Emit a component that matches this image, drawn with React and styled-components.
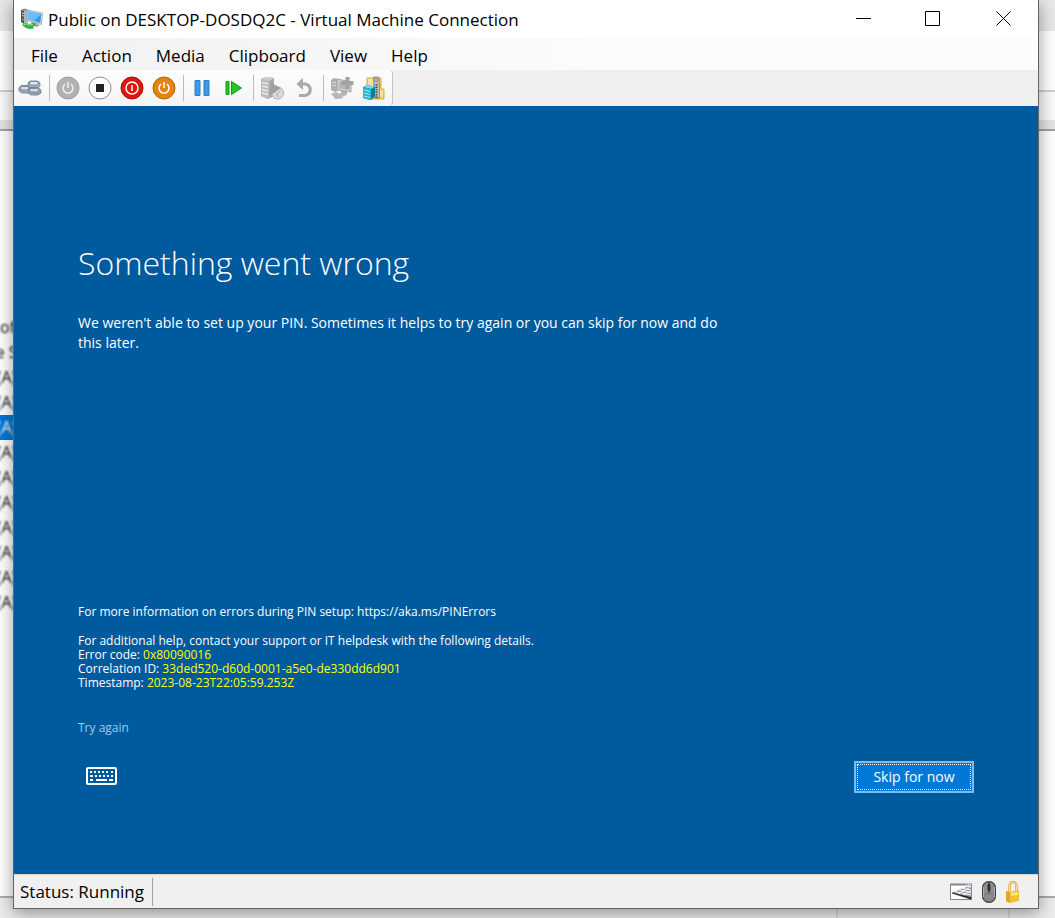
import styled, { createGlobalStyle, css } from "styled-components";

const menus = ["File", "Action", "Media", "Clipboard", "View", "Help"];

const details = [
    { label: "Error code:", value: "0x80090016" },
    { label: "Correlation ID:", value: "33ded520-d60d-0001-a5e0-de330dd6d901" },
    { label: "Timestamp:", value: "2023-08-23T22:05:59.253Z" },
]

const treeRows = [
    { id: 1, text: "of", start: true },
    { id: 2, text: "e S" },
    { id: 3, text: "(A)" },
    { id: 4, text: "(A)" },
    { id: 5, text: "(A)", selected: true },
    { id: 6, text: "(A)" },
    { id: 7, text: "(A)" },
    { id: 8, text: "(A)" },
    { id: 9, text: "(A)" },
    { id: 10, text: "(A)" },
    { id: 11, text: "(A)" },
    { id: 12, text: "(A)" },
]

function AppIcon() {
    return (
        <svg width="22" height="22" viewBox="0 0 22 22" aria-hidden="true">
            <path d="M0 2l3-1.500 4 1v12l-3 2-4-2z" fill="#8d9498" />
            <path d="M0 2l3 1v13l-3-2z" fill="#4b545a" />
            <path d="M3 3l4-1v12l-4 2z" fill="#aeb5b9" />
            <path d="M1 5l2 .6M1 7.500l2 .6" stroke="#d6dadd" />
            <path d="M1 11.500h1.500" stroke="#55e04a" strokeWidth="1.500" />
            <path d="M11 12l5 1.500v2.500l3 1-3 2-6-2z" fill="#9aa2a6" />
            <path d="M6 2l15.500 3-1 11.500L6 12.500z" fill="#dbe3e7" stroke="#7f8b92" strokeWidth=".6" />
            <path d="M7.200 3.300l13 2.700-.8 9L7.200 11.500z" fill="#2f9ce6" />
            <path d="M7.200 3.300l13 2.700-7 7-6-1.500z" fill="#66bff8" />
            <path d="M1 17l4-2.500 3 1.500 5-1 2 2.500-3 1 1 2-5 .5-4-1.500z" fill="#2db14c" />
            <path d="M3 17l2.500-1.200 2.500 1.200 4-.5" stroke="#8beb92" fill="none" />
        </svg>
    )
}

function KeysIcon() {
    return (
        <svg width="24" height="18" viewBox="0 0 24 18" aria-hidden="true">
            <g stroke="#707b89" strokeWidth=".8" strokeLinejoin="round">
                <path d="M10 4l2-2h8l2 2v3l-2 2h-7l-3-2z" fill="#a3b0be" />
                <path d="M11 4l2-1.500h6L20.500 4 19 6h-6z" fill="#dfe6ed" />
                <path d="M1 9l2-2.500h7L12.500 9v3l-2 2H4l-3-2z" fill="#9dabba" />
                <path d="M2 9l2-1.500h5.500L11 9l-1.500 2H4z" fill="#d8e0e9" />
                <path d="M10 11l2-2.500h8l3 2.500v3l-3 2h-7l-3-2z" fill="#93a2b3" />
                <path d="M11 11l2-1.500h6.500L21 11l-1.500 2H13z" fill="#d3dde7" />
            </g>
        </svg>
    )
}

function RoundIcon({ fill, rim, children }) {
    return (
        <svg width="24" height="24" viewBox="0 0 24 24" aria-hidden="true">
            <circle cx="12" cy="12" r="11" fill={fill} stroke={rim} />
            {children}
        </svg>
    )
}

function PowerGlyph({ stroke }) {
    return <path d="M9 8.200a5 5 0 1 0 6 0M12 6v6" fill="none" stroke={stroke} strokeWidth="1.600" />
}

function CheckpointIcon() {
    return (
        <svg width="24" height="24" viewBox="0 0 24 24" aria-hidden="true">
            <path d="M1 3l5-2 8 1v18l-6 3-7-3z" fill="#a8a8a8" />
            <path d="M1 3l5-2 8 1-5 3z" fill="#cecece" />
            <path d="M1 3l8 2v18l-8-3z" fill="#bcbcbc" />
            <path d="M2 6.500l6 1.500M2 10l6 1.500M2 13.500l6 1.500M2 17l6 1.500" stroke="#eaeaea" strokeWidth="1.500" />
            <circle cx="17.500" cy="17" r="6" fill="#dcdcdc" stroke="#a9a9a9" />
            <path d="M11 7l10 5-10 7z" fill="#a0a0a0" />
            <path d="M16.500 18l4-3M16.500 18l2 3" stroke="#a5a5a5" />
        </svg>
    )
}

function RevertIcon() {
    return (
        <svg width="18" height="20" viewBox="0 0 18 20" aria-hidden="true">
            <path d="M5 6h4.500a5.700 5.700 0 0 1 0 11.500H4" fill="none" stroke="#a9a9a9" strokeWidth="3.200" />
            <path d="M8 0L1.500 6 8 12z" fill="#a9a9a9" />
        </svg>
    )
}

function EnhancedIcon() {
    return (
        <svg width="24" height="24" viewBox="0 0 24 24" aria-hidden="true">
            <path d="M1 4l3-2 4 1v12l-3 1-4-2z" fill="#aeaeae" />
            <path d="M2 6l4 1M2 9l4 1" stroke="#dedede" />
            <path d="M11 14h6v4h-6z" fill="#b0b0b0" />
            <path d="M7 3l14 3v10L7 14z" fill="#cfcfcf" stroke="#a8a8a8" />
            <path d="M9 5.500l10 2v6.500l-10-1.500z" fill="#b7b7b7" />
            <path d="M15.500 1h4v4h4v4h-4v4h-4V9h-4V5h4z" fill="#a3a3a3" />
            <path d="M1 18l5-2 3 1.500 6-.5 2 2-4 1.500-1 2-7 .5-2-3z" fill="#b7b7b7" />
        </svg>
    )
}

function ShareIcon() {
    return (
        <svg width="24" height="24" viewBox="0 0 24 24" aria-hidden="true">
            <path d="M5 2h14v11h3v10H5z" fill="#f0cd6b" stroke="#dcae40" />
            <path d="M6 3h5v9H6zM18 14h3v7h-3z" fill="#fae39a" />
            <path d="M11.500 1h5l1 7v14h-5z" fill="#c2c0ba" stroke="#85827b" strokeWidth=".8" />
            <path d="M14.500 8v14" stroke="#55524c" strokeWidth="2" strokeDasharray="1.500 1" />
            <circle cx="14" cy="4" r="1.500" fill="#f5f4f1" stroke="#77736b" />
            <path d="M1 11l4-2 8 1.500v10L9 24l-8-2z" fill="#087f9c" />
            <path d="M1 11l4-2 8 1.500L9 13z" fill="#6be0ed" />
            <path d="M1 11l8 2v11l-8-2z" fill="#1fb6cd" />
            <path d="M2 14l6 1.500M2 17l6 1.500M2 20l6 1.500" stroke="#a5eff6" />
        </svg>
    )
}

function KeyboardIcon() {
    return (
        <svg width="32" height="20" viewBox="0 0 32 20" aria-hidden="true">
            <rect x="1" y="1" width="29" height="16" rx="1" fill="none" stroke="#fff" strokeWidth="2" />
            <path d="M4 5h2M8 5h2M12 5h2M16 5h2M20 5h2M25 5h2M4 9h3M9 9h2M13 9h2M17 9h2M21 9h2M25 9h2M4 13h3M10 13h11M23 13h4" stroke="#fff" strokeWidth="2" />
        </svg>
    )
}

function InputIcon() {
    return (
        <svg width="22" height="18" viewBox="0 0 22 18" aria-hidden="true">
            <rect x="0.500" y="1.500" width="21" height="15" fill="#fff" stroke="#80868b" />
            <path d="M0 1.500h22" stroke="#80868b" strokeWidth="2" />
            <path d="M16 1.500h1M18 1.500h1M20 1.500h1" stroke="#fff" />
            <path d="M2 9.500L17 4l4 .5V14z" fill="#8f959b" />
            <path d="M5 8.500l16 3.500M9 7l12 2.500M13 5.500l8 1.500M8 11l11-6M13 12l8-4" stroke="#fff" />
            <path d="M2 9.500L21 14v2.500L2 10.500z" fill="#24282c" />
        </svg>
    )
}

function MouseIcon() {
    return (
        <svg width="14" height="22" viewBox="0 0 14 22" aria-hidden="true">
            <rect x="0.500" y="0.500" width="13" height="21" rx="6" fill="#6c6c6c" stroke="#3c3c3c" />
            <path d="M2 5q1-3 4-3.500v10l-4 2zM12 5q-1-3-4-3.500v10l4 2z" fill="#8e8e8e" />
            <path d="M2 14l5-2 5 2v3q-1 3-5 3t-5-3z" fill="#8a8a8a" />
            <path d="M1.500 6v10M12.500 6v10" stroke="#c4c4c4" strokeWidth=".8" />
            <path d="M7 1v11" stroke="#333" />
            <rect x="5.500" y="3" width="3" height="7" rx="1.500" fill="#2e2e2e" />
        </svg>
    )
}

function LockIcon() {
    return (
        <svg width="14" height="22" viewBox="0 0 14 22" aria-hidden="true">
            <path d="M3.500 11V5a3.500 4 0 0 1 7 0v6" fill="none" stroke="#d9a032" strokeWidth="2.400" />
            <path d="M3.500 11V5a3.500 4 0 0 1 7 0v6" fill="none" stroke="#fce49a" />
            <path d="M0 10l4 1 9-2v11l-9 2-4-2z" fill="#f5bd3c" />
            <path d="M0 10l4 1v11l-4-2z" fill="#e0a52e" />
            <path d="M5 12l7-1v3l-7 1z" fill="#ffe18a" />
        </svg>
    )
}

export default function App() {
    return (
        <Desktop>
            <GlobalStyle />
            <Backdrop aria-hidden="true">
                <BackBand $height={31} $color="#e8e8e8" />
                <BackBand $height={59} $color="#fff" />
                <BackBand $height={2} $color="#cfd0d2" />
                <BackBand $height={28} $color="#fafafa" />
                <BackBand $height={9} $color="#e4e4e4" />
                <BackBand $height={2} $color="#a0a2a8" />
                <Tree>
                    {treeRows.map(({ id, text, selected, start }) => (
                        <TreeRow key={id} $selected={selected} $start={start}>
                            <span>{text}</span>
                        </TreeRow>
                    ))}
                </Tree>
                <BackBand $height={2} $color="#a9abb0" />
                <BackStatus>
                    <BackPane $width={172} />
                    <BackPane $width={47} />
                </BackStatus>
            </Backdrop>
            <Window>
                <TitleBar>
                    <AppIcon />
                    <h1>Public on DESKTOP-DOSDQ2C - Virtual Machine Connection</h1>
                    <CaptionButton aria-label="Minimize">
                        <svg width="16" height="16" viewBox="0 0 16 16"><path d="M1 8.500h15" stroke="#000" /></svg>
                    </CaptionButton>
                    <CaptionButton aria-label="Maximize">
                        <svg width="16" height="16" viewBox="0 0 16 16"><path d="M.5 1.500h14v14H.5z" fill="none" stroke="#000" /></svg>
                    </CaptionButton>
                    <CaptionButton aria-label="Close">
                        <svg width="16" height="16" viewBox="0 0 16 16"><path d="M1.500 1.500l14 14M15.500 1.500l-14 14" stroke="#000" /></svg>
                    </CaptionButton>
                </TitleBar>
                <MenuBar>
                    {menus.map((name) => <button key={name}>{name}</button>)}
                </MenuBar>
                <ToolBar>
                    <Tools>
                        <Tool aria-label="Ctrl+Alt+Delete"><KeysIcon /></Tool>
                        <Divider />
                        <Tool aria-label="Start" disabled>
                            <RoundIcon fill="#b2b2b2" rim="#9e9e9e"><PowerGlyph stroke="#eee" /></RoundIcon>
                        </Tool>
                        <Tool aria-label="Turn Off">
                            <RoundIcon fill="#fff" rim="#8e8e8e"><rect x="8" y="8" width="8" height="8" fill="#222" /></RoundIcon>
                        </Tool>
                        <Tool aria-label="Shut Down">
                            <RoundIcon fill="#dc1710" rim="#a8120d">
                                <circle cx="12" cy="12" r="6" fill="none" stroke="#fff" strokeWidth="1.500" />
                                <path d="M12 9v6" stroke="#fff" strokeWidth="1.500" />
                            </RoundIcon>
                        </Tool>
                        <Tool aria-label="Save">
                            <RoundIcon fill="#e5830c" rim="#b0670c"><PowerGlyph stroke="#fff" /></RoundIcon>
                        </Tool>
                        <Divider />
                        <Tool aria-label="Pause">
                            <svg width="16" height="18" viewBox="0 0 16 18"><path d="M1 1.500h5v15H1zM10 1.500h5v15h-5z" fill="#3a9bea" stroke="#2c7fc6" /></svg>
                        </Tool>
                        <Tool aria-label="Reset">
                            <svg width="18" height="16" viewBox="0 0 18 16"><path d="M1 1.500h3v13H1zM6.500 1.500L16.500 8l-10 6.500z" fill="#1fc71f" stroke="#129a1c" /></svg>
                        </Tool>
                        <Divider />
                        <Tool aria-label="Checkpoint" disabled><CheckpointIcon /></Tool>
                        <Tool aria-label="Revert" disabled><RevertIcon /></Tool>
                        <Divider />
                        <Tool aria-label="Enhanced Session" disabled><EnhancedIcon /></Tool>
                        <Tool aria-label="Share"><ShareIcon /></Tool>
                    </Tools>
                </ToolBar>
                <Screen>
                    <h2>Something went wrong</h2>
                    <Message>
                        We weren't able to set up your PIN. Sometimes it helps to try again or you can skip for now and do this later.
                    </Message>
                    <Info>
                        <p>For more information on errors during PIN setup: https://aka.ms/PINErrors</p>
                        <div>
                            <p>For additional help, contact your support or IT helpdesk with the following details.</p>
                            {details.map(({ label, value }) => (
                                <p key={label}>{label} <span>{value}</span></p>
                            ))}
                        </div>
                    </Info>
                    <RetryLink href="#retry">Try again</RetryLink>
                    <Footer>
                        <KeyboardButton aria-label="On-screen keyboard"><KeyboardIcon /></KeyboardButton>
                        <SkipButton>Skip for now</SkipButton>
                    </Footer>
                </Screen>
                <StatusBar>
                    <StatusText>Status: Running</StatusText>
                    <StatusIcons>
                        <InputIcon />
                        <MouseIcon />
                        <LockIcon />
                    </StatusIcons>
                </StatusBar>
            </Window>
        </Desktop>
    )
}

const GlobalStyle = createGlobalStyle`
*{
    box-sizing: border-box;
}
body{
    margin: 0;
    font-family: "Open Sans", "Noto Sans", sans-serif;
}
h1, h2, p{
    margin: 0;
    font-weight: 400;
}
button{
    border: 0;
    padding: 0;
    background: none;
    color: inherit;
    font: inherit;
}
svg{
    display: block;
    flex: none;
}
`;

const Desktop = styled.div`
display: grid;
min-height: 100vh;
overflow: hidden;
background: #fff;
`;

const Backdrop = styled.div`
grid-area: 1 / 1;
display: flex;
flex-direction: column;
min-width: 0;
`;

const BackBand = styled.div`
flex: none;
height: ${({ $height }) => $height}px;
background: ${({ $color }) => $color};
`;

const BackStatus = styled.div`
display: flex;
justify-content: flex-end;
height: 20px;
background: #ececec;
`;

const BackPane = styled.div`
width: ${({ $width }) => $width}px;
border-left: 2px solid #dadada;
`;

const Tree = styled.div`
flex: 1;
padding-top: 184px;
`;

const TreeRow = styled.div`
display: flex;
justify-content: ${({ $start }) => $start ? "flex-start" : "center"};
width: 13px;
height: 25px;
overflow: hidden;
line-height: 25px;
font-size: 16px;
color: #111;
span{
    flex: none;
    white-space: nowrap;
    filter: blur(1px);
}
${({ $selected }) => $selected && css`
    background: #0078d7;
    color: #fff;
`}
`;

const Window = styled.main`
grid-area: 1 / 1;
z-index: 1;
display: flex;
flex-direction: column;
min-width: 0;
margin: 0 16px 9px 13px;
border: 1px solid #626568;
border-top: 0;
background: #f0f0f0;
box-shadow: 0 4px 16px rgba(0, 0, 0, 0.4);
`;

const TitleBar = styled.header`
display: flex;
align-items: center;
height: 38px;
padding-left: 7px;
background: #fff;
h1{
    flex: 1;
    margin-left: 5px;
    font-size: 17px;
    white-space: nowrap;
}
`;

const CaptionButton = styled.button`
display: flex;
align-items: center;
justify-content: center;
align-self: flex-start;
width: 70px;
height: 36px;
`;

const MenuBar = styled.nav`
display: flex;
gap: 24px;
height: 32px;
padding: 2px 17px 0;
background: linear-gradient(to right, #f0f0f0, #fcfcfc 60%);
font-size: 17px;
`;

const ToolBar = styled.div`
display: flex;
height: 36px;
background: #efefef;
`;

const Tools = styled.div`
display: flex;
align-items: center;
padding-right: 2px;
border-right: 1px solid #c4c4c4;
border-radius: 0 4px 4px 0;
background: linear-gradient(#fdfdfd, #f4f4f4);
`;

const Tool = styled.button`
display: flex;
align-items: center;
justify-content: center;
width: 32px;
height: 32px;
`;

const Divider = styled.span`
width: 1px;
height: 26px;
margin: 0 2px 0 3px;
background: #bcbcbc;
`;

const Screen = styled.section`
flex: 1;
display: flex;
flex-direction: column;
align-items: flex-start;
padding: 134px 64px 81px;
background: #005a9e;
color: #fff;
h2{
    font-size: 32px;
    font-weight: 300;
    line-height: 46px;
}
`;

const Message = styled.p`
max-width: 660px;
margin-top: 27px;
font-size: 14px;
line-height: 20px;
`;

const Info = styled.div`
display: flex;
flex-direction: column;
gap: 15px;
margin-top: auto;
font-size: 12px;
line-height: 14px;
span{
    color: #ff0;
}
`;

const RetryLink = styled.a`
margin-top: 29px;
font-size: 12px;
line-height: 18px;
color: #99cdf5;
text-decoration: none;
`;

const Footer = styled.div`
display: flex;
align-items: center;
justify-content: space-between;
align-self: stretch;
margin-top: 24px;
`;

const KeyboardButton = styled.button`
margin-left: 8px;
`;

const SkipButton = styled.button`
width: 120px;
height: 32px;
padding-bottom: 2px;
border: 2px solid #7fbbeb;
background: #0078d7;
font-size: 14px;
outline: 1px dotted #fff;
outline-offset: -4px;
`;

const StatusBar = styled.footer`
display: flex;
align-items: center;
justify-content: space-between;
height: 34px;
padding: 0 18px 0 6px;
border-top: 1px solid #d7d7d7;
`;

const StatusText = styled.div`
padding-right: 8px;
border-right: 1px solid #a0a0a0;
font-size: 17px;
line-height: 28px;
`;

const StatusIcons = styled.div`
display: flex;
align-items: center;
gap: 10px;
`;
